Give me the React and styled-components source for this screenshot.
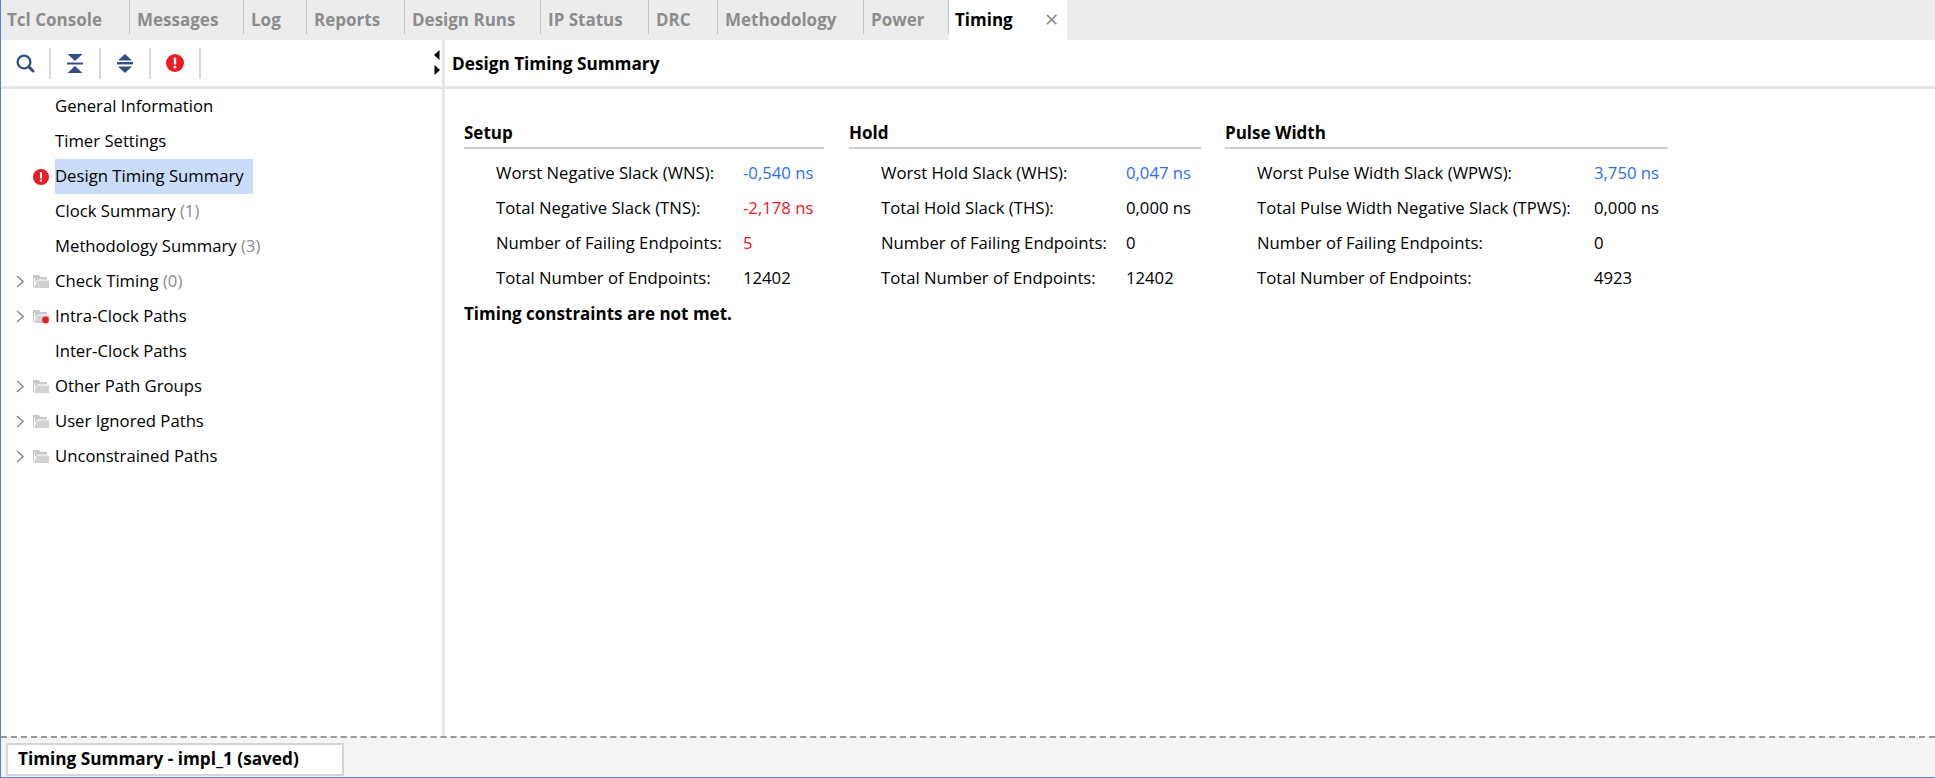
import React from "react";
import styled, { createGlobalStyle } from "styled-components";

const tabs = [
  { name: "Tcl Console", width: 129 },
  { name: "Messages", width: 114 },
  { name: "Log", width: 63 },
  { name: "Reports", width: 98 },
  { name: "Design Runs", width: 136 },
  { name: "IP Status", width: 108 },
  { name: "DRC", width: 69 },
  { name: "Methodology", width: 146 },
  { name: "Power", width: 85 },
];

const tree = [
  { label: "General Information" },
  { label: "Timer Settings" },
  { label: "Design Timing Summary", icon: "error", selected: true },
  { label: "Clock Summary", count: 1 },
  { label: "Methodology Summary", count: 3 },
  { label: "Check Timing", count: 0, icon: "folder", expandable: true },
  { label: "Intra-Clock Paths", icon: "folderError", expandable: true },
  { label: "Inter-Clock Paths" },
  { label: "Other Path Groups", icon: "folder", expandable: true },
  { label: "User Ignored Paths", icon: "folder", expandable: true },
  { label: "Unconstrained Paths", icon: "folder", expandable: true },
];

const sections = [
  {
    title: "Setup",
    width: 360,
    gap: 25,
    labelWidth: 247,
    rows: [
      ["Worst Negative Slack (WNS):", "-0,540 ns", "blue"],
      ["Total Negative Slack (TNS):", "-2,178 ns", "red"],
      ["Number of Failing Endpoints:", "5", "red"],
      ["Total Number of Endpoints:", "12402"],
    ],
  },
  {
    title: "Hold",
    width: 352,
    gap: 24,
    labelWidth: 245,
    rows: [
      ["Worst Hold Slack (WHS):", "0,047 ns", "blue"],
      ["Total Hold Slack (THS):", "0,000 ns"],
      ["Number of Failing Endpoints:", "0"],
      ["Total Number of Endpoints:", "12402"],
    ],
  },
  {
    title: "Pulse Width",
    width: 443,
    gap: 0,
    labelWidth: 337,
    rows: [
      ["Worst Pulse Width Slack (WPWS):", "3,750 ns", "blue"],
      ["Total Pulse Width Negative Slack (TPWS):", "0,000 ns"],
      ["Number of Failing Endpoints:", "0"],
      ["Total Number of Endpoints:", "4923"],
    ],
  },
];

function ErrorIcon({ size = 16 }) {
  return (
    <svg width={size} height={size} viewBox="0 0 18 18">
      <circle cx="9" cy="9" r="9" fill="#ed1c24" />
      <rect x="7.8" y="3.4" width="2.4" height="7.4" rx="1" fill="#fff" />
      <circle cx="9" cy="13.2" r="1.4" fill="#fff" />
    </svg>
  );
}

function SearchIcon() {
  return (
    <svg width="19" height="19" viewBox="0 0 19 19">
      <circle cx="8" cy="8" r="6.4" fill="none" stroke="#2f4f86" strokeWidth="2.3" />
      <path d="M13 13l4 4" stroke="#2f4f86" strokeWidth="3" strokeLinecap="round" />
    </svg>
  );
}

function CollapseIcon() {
  return (
    <svg width="16" height="19" viewBox="0 0 16 19">
      <path d="M0.5 0h15L8 7z" fill="#2f4f86" />
      <rect x="0" y="8.5" width="16" height="2" fill="#2f4f86" />
      <path d="M8 12l7.5 7H0.5z" fill="#2f4f86" />
    </svg>
  );
}

function ExpandIcon() {
  return (
    <svg width="16" height="19" viewBox="0 0 16 19">
      <path d="M8 0l7 6.5H1z" fill="#2f4f86" />
      <rect x="0" y="8" width="16" height="2.4" fill="#2f4f86" />
      <path d="M1 12.4h14L8 19z" fill="#2f4f86" />
    </svg>
  );
}

function FolderIcon({ error }) {
  return (
    <svg width="16" height="15" viewBox="0 0 16 15">
      <path d="M0 1h6l1.5 2H14v2.5H4.5L2 8V4H1v9H0z" fill="#c9c9c9" />
      <path d="M1 14l2.8-7.5H16V14z" fill="#d2d2d2" />
      {error && <circle cx="12.5" cy="11" r="3.4" fill="#ed1c24" />}
    </svg>
  );
}

function Chevron() {
  return (
    <svg width="9" height="13" viewBox="0 0 9 13">
      <path d="M1 1l6 5.5L1 12" fill="none" stroke="#8a8a8a" strokeWidth="1.5" />
    </svg>
  );
}

function SashGrip() {
  return (
    <svg width="6" height="26" viewBox="0 0 6 26">
      <path d="M5.5 0v10L0 5z" fill="#000" />
      <path d="M0.5 15l5.5 5-5.5 5z" fill="#000" />
    </svg>
  );
}

function TreeIcon({ icon }) {
  if (icon === "error") return <ErrorIcon />;
  if (icon === "folder") return <FolderIcon />;
  if (icon === "folderError") return <FolderIcon error />;
  return null;
}

export default function App() {
  return (
    <>
      <GlobalStyle />
      <Page>
        <TabBar>
          {tabs.map((tab) => (
            <Tab key={tab.name} $width={tab.width}>
              {tab.name}
            </Tab>
          ))}
          <ActiveTab>
            Timing
            <CloseMark>×</CloseMark>
          </ActiveTab>
        </TabBar>
        <Body>
          <Sidebar>
            <Toolbar>
              <ToolButton>
                <SearchIcon />
              </ToolButton>
              <ToolButton>
                <CollapseIcon />
              </ToolButton>
              <ToolButton>
                <ExpandIcon />
              </ToolButton>
              <ToolButton>
                <ErrorIcon size={18} />
              </ToolButton>
              <Grip>
                <SashGrip />
              </Grip>
            </Toolbar>
            <Tree>
              {tree.map((item) => (
                <TreeRow key={item.label}>
                  <ChevronSlot>{item.expandable && <Chevron />}</ChevronSlot>
                  <IconSlot>
                    <TreeIcon icon={item.icon} />
                  </IconSlot>
                  <TreeLabel $selected={item.selected}>
                    {item.label}
                    {item.count !== undefined && <Count> ({item.count})</Count>}
                  </TreeLabel>
                </TreeRow>
              ))}
            </Tree>
          </Sidebar>
          <Main>
            <MainHeader>Design Timing Summary</MainHeader>
            <Summary>
              <Columns>
                {sections.map((section) => (
                  <Section key={section.title} $width={section.width} $gap={section.gap}>
                    <SectionTitle>{section.title}</SectionTitle>
                    {section.rows.map(([label, value, tone]) => (
                      <Metric key={label}>
                        <MetricLabel $width={section.labelWidth}>{label}</MetricLabel>
                        <MetricValue $tone={tone}>{value}</MetricValue>
                      </Metric>
                    ))}
                  </Section>
                ))}
              </Columns>
              <Verdict>Timing constraints are not met.</Verdict>
            </Summary>
          </Main>
        </Body>
        <Footer>
          <FooterTab>Timing Summary - impl_1 (saved)</FooterTab>
        </Footer>
      </Page>
    </>
  );
}

/*
  Styles
*/

const GlobalStyle = createGlobalStyle`
  html, body {
    margin: 0;
    padding: 0;
    background: #fff;
    overflow: hidden;
  }
  body {
    font-family: "Open Sans", "Noto Sans", sans-serif;
    font-size: 16.7px;
    color: #000;
  }
`;

const Page = styled.div`
  width: 1935px;
  height: 778px;
  box-sizing: border-box;
  display: flex;
  flex-direction: column;
  border-left: 1px solid #4f82d8;
  border-bottom: 1px solid #4f82d8;
`;

const TabBar = styled.div`
  height: 40px;
  flex: none;
  display: flex;
  background: #ececec;
`;

const Tab = styled.div`
  width: ${({ $width }) => $width}px;
  height: 34px;
  box-sizing: border-box;
  padding-left: 7px;
  border-right: 1px solid #c4c4c4;
  font-weight: 700;
  font-size: 17px;
  line-height: 39px;
  color: #8c8c8c;
  white-space: nowrap;
  &:first-child {
    padding-left: 6px;
  }
`;

const ActiveTab = styled.div`
  width: 118px;
  box-sizing: border-box;
  padding-left: 6px;
  display: flex;
  background: #fff;
  font-weight: 700;
  font-size: 17px;
  line-height: 39px;
  color: #000;
`;

const CloseMark = styled.span`
  margin-left: 32px;
  font-weight: 400;
  font-size: 24px;
  line-height: 37px;
  color: #8c8c8c;
`;

const Body = styled.div`
  flex: 1;
  min-height: 0;
  display: flex;
`;

const Sidebar = styled.div`
  width: 444px;
  box-sizing: border-box;
  flex: none;
  border-right: 3px solid #e6e6e6;
  display: flex;
  flex-direction: column;
`;

const Toolbar = styled.div`
  height: 49px;
  box-sizing: border-box;
  flex: none;
  display: flex;
  align-items: center;
  border-bottom: 3px solid #e6e6e6;
`;

const ToolButton = styled.div`
  width: 50px;
  height: 31px;
  box-sizing: border-box;
  display: flex;
  align-items: center;
  justify-content: center;
  border-right: 2px solid #d8d8d8;
`;

const Grip = styled.div`
  margin-left: auto;
  margin-right: 2px;
  display: flex;
`;

const Tree = styled.div`
  padding-top: 0;
`;

const TreeRow = styled.div`
  height: 35px;
  display: flex;
  align-items: center;
  padding-left: 15px;
`;

const ChevronSlot = styled.div`
  width: 17px;
  flex: none;
  display: flex;
`;

const IconSlot = styled.div`
  width: 22px;
  flex: none;
  display: flex;
  align-items: center;
`;

const TreeLabel = styled.div`
  height: 35px;
  width: ${({ $selected }) => ($selected ? "198px" : "auto")};
  box-sizing: border-box;
  line-height: 34px;
  white-space: nowrap;
  background: ${({ $selected }) => ($selected ? "#c9dcf9" : "transparent")};
`;

const Count = styled.span`
  color: #8c8c8c;
`;

const Main = styled.div`
  flex: 1;
  min-width: 0;
  display: flex;
  flex-direction: column;
`;

const MainHeader = styled.div`
  height: 49px;
  box-sizing: border-box;
  flex: none;
  padding-left: 7px;
  border-bottom: 3px solid #e6e6e6;
  font-weight: 700;
  font-size: 17.2px;
  line-height: 48px;
`;

const Summary = styled.div`
  padding: 28px 0 0 19px;
`;

const Columns = styled.div`
  display: flex;
`;

const Section = styled.div`
  width: ${({ $width }) => $width}px;
  margin-right: ${({ $gap }) => $gap}px;
  flex: none;
`;

const SectionTitle = styled.div`
  height: 32px;
  box-sizing: border-box;
  border-bottom: 2px solid #cfcfcf;
  font-weight: 700;
  font-size: 17px;
  line-height: 31px;
  margin-bottom: 6px;
`;

const Metric = styled.div`
  height: 35px;
  display: flex;
  align-items: center;
  padding-left: 32px;
  white-space: nowrap;
`;

const MetricLabel = styled.div`
  width: ${({ $width }) => $width}px;
  flex: none;
`;

const toneColors = { blue: "#2d6ff0", red: "#f5141e" };

const MetricValue = styled.div`
  color: ${({ $tone }) => toneColors[$tone] || "#000"};
`;

const Verdict = styled.div`
  margin-top: 7px;
  font-weight: 700;
  font-size: 17px;
  line-height: 24px;
`;

const Footer = styled.div`
  height: 41px;
  flex: none;
  box-sizing: border-box;
  border-top: 2px dashed #9a9a9a;
  background: #f5f5f5;
  padding: 5px 0 0 5px;
`;

const FooterTab = styled.div`
  width: 338px;
  height: 33px;
  box-sizing: border-box;
  border: 2px solid #d6d6d6;
  background: #fff;
  padding-left: 10px;
  font-weight: 700;
  font-size: 17.2px;
  line-height: 28px;
`;
